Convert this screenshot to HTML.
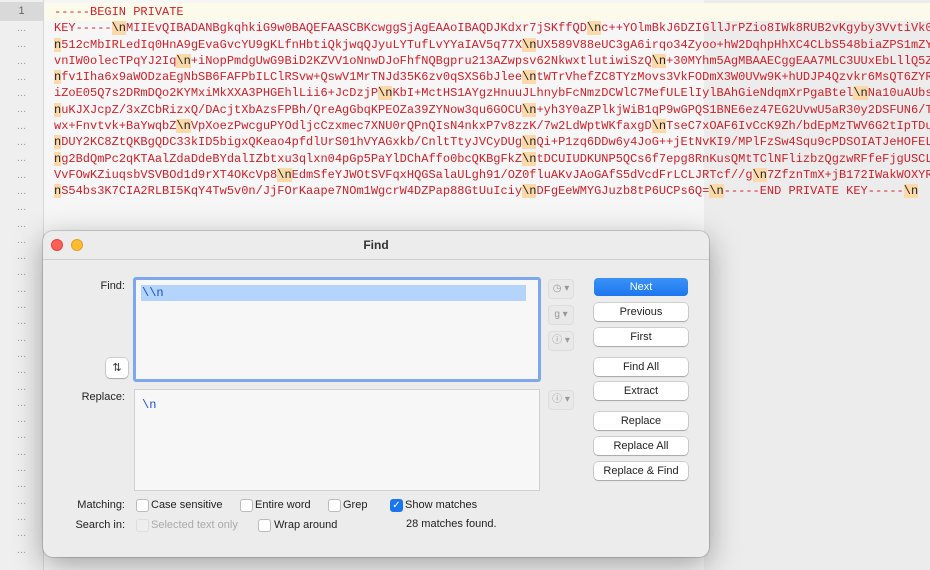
<!DOCTYPE html>
<html><head><meta charset="utf-8"><style>
*{margin:0;padding:0;box-sizing:border-box}
body{width:930px;height:570px;overflow:hidden;background:#f6f6f6;font-family:"Liberation Sans",sans-serif;position:relative}
#gut{position:absolute;left:0;top:0;width:44px;height:570px;background:#efefef;border-right:1px solid #d8d8d8}
#gut div{height:16.3px;line-height:16px;font-size:10px;color:#999;text-align:center}
#gut .cur{background:#d9d9d9;color:#666;font-size:11px;height:19px;line-height:19px}
#guide{position:absolute;left:704px;top:0;right:0;height:570px;background:#ececec}
#hl{position:absolute;left:45px;top:3px;width:885px;height:18px;background:#fcfbeb}
#code{position:absolute;left:54px;top:4px;width:876px;font-family:"Liberation Mono",monospace;font-size:12px;color:#d0202a;overflow:hidden}
#code div{height:16.3px;line-height:16px;overflow:hidden;white-space:pre}
#code b{font-weight:normal;background:#fbd9a8;color:#222}
#dlg{position:absolute;left:43px;top:231px;width:666px;height:326px;background:#ececec;border-radius:10px;box-shadow:0 8px 30px rgba(0,0,0,.35),0 0 0 1px rgba(0,0,0,.15)}
.t{position:absolute;font-size:11px;color:#222;white-space:nowrap}
.btn{position:absolute;left:551px;width:94px;height:18px;background:#fff;border-radius:4px;box-shadow:0 0 0 .5px rgba(0,0,0,.25),0 1px 1px rgba(0,0,0,.2);font-size:11px;text-align:center;line-height:18px;color:#222}
.ib{position:absolute;left:505px;width:26px;height:20px;border:1px solid #ddd;border-radius:4px;background:#e9e9e9;font-size:10px;color:#999;text-align:center;line-height:18px}
.cb{position:absolute;width:13px;height:13px;background:#fff;border:1px solid #bbb;border-radius:3px}
</style></head><body>
<div id="guide"></div>
<div id="gut"><div style="height:2px"></div><div class="cur">1</div><div>…</div><div>…</div><div>…</div><div>…</div><div>…</div><div>…</div><div>…</div><div>…</div><div>…</div><div>…</div><div>…</div><div>…</div><div>…</div><div>…</div><div>…</div><div>…</div><div>…</div><div>…</div><div>…</div><div>…</div><div>…</div><div>…</div><div>…</div><div>…</div><div>…</div><div>…</div><div>…</div><div>…</div><div>…</div><div>…</div><div>…</div><div>…</div><div>…</div></div>
<div id="hl"></div>
<div id="code"><div>-----BEGIN PRIVATE</div><div>KEY-----<b>\n</b>MIIEvQIBADANBgkqhkiG9w0BAQEFAASCBKcwggSjAgEAAoIBAQDJKdxr7jSKffQD<b>\n</b>c++YOlmBkJ6DZIGllJrPZio8IWk8RUB2vKgyby3VvtiVk0</div><div><b>n</b>512cMbIRLedIq0HnA9gEvaGvcYU9gKLfnHbtiQkjwqQJyuLYTufLvYYaIAV5q77X<b>\n</b>UX589V88eUC3gA6irqo34Zyoo+hW2DqhpHhXC4CLbS548biaZPS1mZY</div><div>vnIW0olecTPqYJ2Iq<b>\n</b>+iNopPmdgUwG9BiD2KZVV1oNnwDJoFhfNQBgpru213AZwpsv62NkwxtlutiwiSzQ<b>\n</b>+30MYhm5AgMBAAECggEAA7MLC3UUxEbLllQ5Z</div><div><b>n</b>fv1Iha6x9aWODzaEgNbSB6FAFPbILClRSvw+QswV1MrTNJd35K6zv0qSXS6bJlee<b>\n</b>tWTrVhefZC8TYzMovs3VkFODmX3W0UVw9K+hUDJP4Qzvkr6MsQT6ZYR</div><div>iZoE05Q7s2DRmDQo2KYMxiMkXXA3PHGEhlLii6+JcDzjP<b>\n</b>KbI+MctHS1AYgzHnuuJLhnybFcNmzDCWlC7MefULElIylBAhGieNdqmXrPgaBtel<b>\n</b>Na10uAUbs</div><div><b>n</b>uKJXJcpZ/3xZCbRizxQ/DAcjtXbAzsFPBh/QreAgGbqKPEOZa39ZYNow3qu6GOCU<b>\n</b>+yh3Y0aZPlkjWiB1qP9wGPQS1BNE6ez47EG2UvwU5aR30y2DSFUN6/T</div><div>wx+Fnvtvk+BaYwqbZ<b>\n</b>VpXoezPwcguPYOdljcCzxmec7XNU0rQPnQIsN4nkxP7v8zzK/7w2LdWptWKfaxgD<b>\n</b>TseC7xOAF6IvCcK9Zh/bdEpMzTWV6G2tIpTDu</div><div><b>n</b>DUY2KC8ZtQKBgQDC33kID5bigxQKeao4pfdlUrS01hVYAGxkb/CnltTtyJVCyDUg<b>\n</b>Qi+P1zq6DDw6y4JoG++jEtNvKI9/MPlFzSw4Squ9cPDSOIATJeHOFEL</div><div><b>n</b>g2BdQmPc2qKTAalZdaDdeBYdalIZbtxu3qlxn04pGp5PaYlDChAffo0bcQKBgFkZ<b>\n</b>tDCUIUDKUNP5QCs6f7epg8RnKusQMtTClNFlizbzQgzwRFfeFjgUSCL</div><div>VvFOwKZiuqsbVSVBOd1d9rXT4OKcVp8<b>\n</b>EdmSfeYJWOtSVFqxHQGSalaULgh91/OZ0fluAKvJAoGAfS5dVcdFrLCLJRTcf//g<b>\n</b>7ZfznTmX+jB172IWakWOXYR</div><div><b>n</b>S54bs3K7CIA2RLBI5KqY4Tw5v0n/JjFOrKaape7NOm1WgcrW4DZPap88GtUuIciy<b>\n</b>DFgEeWMYGJuzb8tP6UCPs6Q=<b>\n</b>-----END PRIVATE KEY-----<b>\n</b></div></div>

<div id="dlg">
 <div style="position:absolute;left:8px;top:8px;width:12px;height:12px;border-radius:50%;background:#fe5f57;border:.5px solid #e0443e"></div>
 <div style="position:absolute;left:28px;top:8px;width:12px;height:12px;border-radius:50%;background:#febc2e;border:.5px solid #dea123"></div>
 <div class="t" style="left:0;width:666px;text-align:center;top:7px;font-weight:bold;font-size:12px;color:#333">Find</div>
 <div style="position:absolute;left:0;top:28px;width:666px;height:1px;background:#d0d0d0"></div>

 <div class="t" style="right:584px;top:49px">Find:</div>
 <div style="position:absolute;left:90px;top:46px;width:408px;height:105px;border:3px solid #7ea8ee;border-radius:3px;background:#f7f7f7"></div>
 <div style="position:absolute;left:98px;top:54px;width:385px;height:16px;background:#b4d4fb"></div>
 <div style="position:absolute;left:99px;top:55px;font-family:'Liberation Mono',monospace;font-size:12px;color:#1a4fd6">\\n</div>
 <div style="position:absolute;left:63px;top:127px;width:22px;height:20px;background:#fff;border-radius:4px;box-shadow:0 0 0 .5px rgba(0,0,0,.25),0 1px 1px rgba(0,0,0,.2);font-size:11px;text-align:center;line-height:20px;color:#333">⇅</div>

 <div class="t" style="right:584px;top:160px">Replace:</div>
 <div style="position:absolute;left:91px;top:158px;width:406px;height:102px;border:1px solid #d0d0d0;background:#f7f7f7"></div>
 <div style="position:absolute;left:99px;top:167px;font-family:'Liberation Mono',monospace;font-size:12px;color:#1a4fd6">\n</div>

 <div class="ib" style="top:48px">◷ ▾</div>
 <div class="ib" style="top:74px">g ▾</div>
 <div class="ib" style="top:100px">ⓘ ▾</div>
 <div class="ib" style="top:159px">ⓘ ▾</div>

 <div class="btn" style="top:47px;background:linear-gradient(#3b93f7,#1b76ee);color:#fff;box-shadow:none">Next</div>
 <div class="btn" style="top:72px">Previous</div>
 <div class="btn" style="top:97px">First</div>
 <div class="btn" style="top:127px">Find All</div>
 <div class="btn" style="top:151px">Extract</div>
 <div class="btn" style="top:181px">Replace</div>
 <div class="btn" style="top:206px">Replace All</div>
 <div class="btn" style="top:231px">Replace &amp; Find</div>

 <div class="t" style="right:584px;top:268px">Matching:</div>
 <div class="cb" style="left:93px;top:268px"></div><div class="t" style="left:108px;top:268px">Case sensitive</div>
 <div class="cb" style="left:197px;top:268px"></div><div class="t" style="left:212px;top:268px">Entire word</div>
 <div class="cb" style="left:285px;top:268px"></div><div class="t" style="left:300px;top:268px">Grep</div>
 <div class="cb" style="left:347px;top:268px;background:#1b76ee;border-color:#1b76ee;color:#fff;font-size:10px;line-height:11px;text-align:center">✓</div><div class="t" style="left:362px;top:268px">Show matches</div>

 <div class="t" style="right:584px;top:288px">Search in:</div>
 <div class="cb" style="left:93px;top:288px;background:#eee;border-color:#ddd"></div><div class="t" style="left:108px;top:288px;color:#aaa">Selected text only</div>
 <div class="cb" style="left:215px;top:288px"></div><div class="t" style="left:231px;top:288px">Wrap around</div>
 <div class="t" style="left:363px;top:287px">28 matches found.</div>
</div>
</body></html>
